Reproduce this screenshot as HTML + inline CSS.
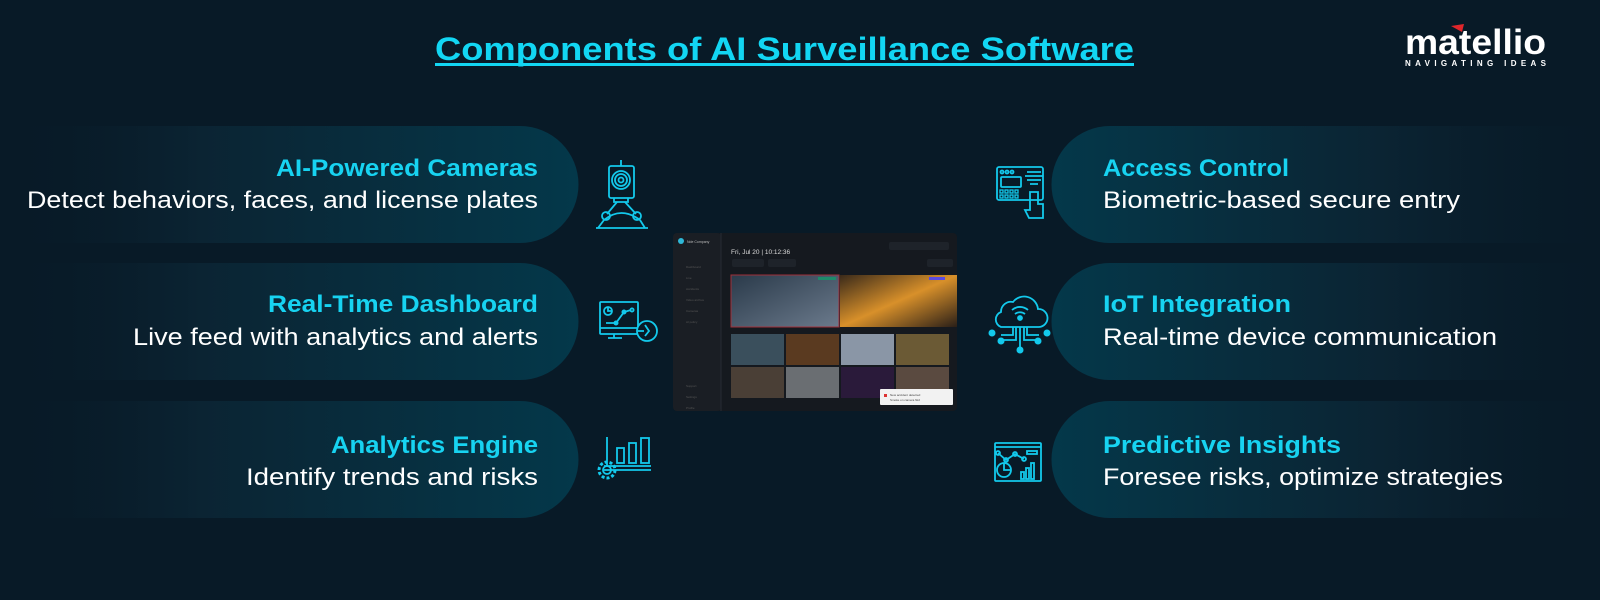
<!DOCTYPE html>
<html><head><meta charset="utf-8"><style>
html,body{margin:0;padding:0;background:#081a27;width:1600px;height:600px;overflow:hidden}
svg{display:block}
</style></head><body>
<svg width="1600" height="600" viewBox="0 0 1600 600" xmlns="http://www.w3.org/2000/svg" font-family="Liberation Sans, sans-serif">
<defs>
<linearGradient id="gl" x1="0" x2="1" y1="0" y2="0"><stop offset="0" stop-color="#081a27" stop-opacity="0"/><stop offset="0.35" stop-color="#0b2433"/><stop offset="1" stop-color="#04384a"/></linearGradient>
<linearGradient id="gr" x1="0" x2="1" y1="0" y2="0"><stop offset="0" stop-color="#04384a"/><stop offset="0.6" stop-color="#0b2433"/><stop offset="1" stop-color="#081a27" stop-opacity="0.3"/></linearGradient>
<linearGradient id="f1" x1="0" x2="1" y1="0" y2="1"><stop offset="0" stop-color="#2a3a4a"/><stop offset="1" stop-color="#6b7a8c"/></linearGradient>
<linearGradient id="f2" x1="0" x2="1" y1="0" y2="1"><stop offset="0" stop-color="#3a2a1a"/><stop offset="0.5" stop-color="#d8902a"/><stop offset="1" stop-color="#2a1f18"/></linearGradient>
</defs>
<rect width="1600" height="600" fill="#081a27"/>
<!-- pills left -->
<path d="M0 126 H520 A58.5 58.5 0 0 1 520 243 H0Z" fill="url(#gl)"/>
<path d="M0 263 H520 A58.5 58.5 0 0 1 520 380 H0Z" fill="url(#gl)"/>
<path d="M0 401 H520 A58.5 58.5 0 0 1 520 518 H0Z" fill="url(#gl)"/>
<!-- pills right -->
<path d="M1600 126 H1110 A58.5 58.5 0 0 0 1110 243 H1600Z" fill="url(#gr)"/>
<path d="M1600 263 H1110 A58.5 58.5 0 0 0 1110 380 H1600Z" fill="url(#gr)"/>
<path d="M1600 401 H1110 A58.5 58.5 0 0 0 1110 518 H1600Z" fill="url(#gr)"/>
<!-- title -->
<text x="435" y="60" font-size="32" font-weight="bold" fill="#12d6f3" textLength="699" lengthAdjust="spacingAndGlyphs">Components of AI Surveillance Software</text>
<rect x="435" y="63" width="699" height="3" fill="#12d6f3"/>
<!-- logo -->
<text x="1405" y="54" font-size="35" font-weight="bold" fill="#fff" textLength="141" lengthAdjust="spacingAndGlyphs">matellio</text>
<path d="M1451 26 L1464 24 L1462 32Z" fill="#e0262b"/>
<text x="1405" y="66" font-size="8" font-weight="bold" fill="#fff" textLength="141" lengthAdjust="spacing">NAVIGATING IDEAS</text>
<!-- left texts -->
<g font-size="24" text-anchor="end">
<text x="538" y="176" font-weight="bold" fill="#17d3f1" textLength="262" lengthAdjust="spacingAndGlyphs">AI-Powered Cameras</text>
<text x="538" y="208" fill="#fff" textLength="511" lengthAdjust="spacingAndGlyphs">Detect behaviors, faces, and license plates</text>
<text x="538" y="312" font-weight="bold" fill="#17d3f1" textLength="270" lengthAdjust="spacingAndGlyphs">Real-Time Dashboard</text>
<text x="538" y="345" fill="#fff" textLength="405" lengthAdjust="spacingAndGlyphs">Live feed with analytics and alerts</text>
<text x="538" y="453" font-weight="bold" fill="#17d3f1" textLength="207" lengthAdjust="spacingAndGlyphs">Analytics Engine</text>
<text x="538" y="485" fill="#fff" textLength="292" lengthAdjust="spacingAndGlyphs">Identify trends and risks</text>
</g>
<g font-size="24">
<text x="1103" y="176" font-weight="bold" fill="#17d3f1" textLength="186" lengthAdjust="spacingAndGlyphs">Access Control</text>
<text x="1103" y="208" fill="#fff" textLength="357" lengthAdjust="spacingAndGlyphs">Biometric-based secure entry</text>
<text x="1103" y="312" font-weight="bold" fill="#17d3f1" textLength="188" lengthAdjust="spacingAndGlyphs">IoT Integration</text>
<text x="1103" y="345" fill="#fff" textLength="394" lengthAdjust="spacingAndGlyphs">Real-time device communication</text>
<text x="1103" y="453" font-weight="bold" fill="#17d3f1" textLength="238" lengthAdjust="spacingAndGlyphs">Predictive Insights</text>
<text x="1103" y="485" fill="#fff" textLength="400" lengthAdjust="spacingAndGlyphs">Foresee risks, optimize strategies</text>
</g>
<!-- icons left -->
<g fill="none" stroke="#13c9ec" stroke-width="1.8">
<!-- camera -->
<line x1="621" y1="160" x2="621" y2="166"/>
<rect x="609" y="166" width="25" height="32" rx="2"/>
<circle cx="621" cy="180" r="9"/><circle cx="621" cy="180" r="6"/><circle cx="621" cy="180" r="2.5"/>
<path d="M614 198 V202 H628 V198"/>
<path d="M617 202 L607 214 M625 202 L636 214"/>
<circle cx="606" cy="216" r="4"/><circle cx="637" cy="216" r="4"/>
<path d="M598 228 L604 220 M645 228 L640 220 M604 220 Q621 206 640 220 M596 228 H648"/>
<!-- dashboard -->
<rect x="600" y="302" width="38" height="32" rx="1"/>
<path d="M600 328 H638 M614 334 V338 M608 338 H622"/>
<circle cx="608" cy="311" r="4"/><path d="M608 307 V311 H612"/>
<path d="M606 323 L616 323 L624 312 L631 310"/><circle cx="616" cy="323" r="1.6"/><circle cx="624" cy="312" r="1.6"/><circle cx="632" cy="310" r="1.6"/>
<circle cx="647" cy="331" r="10" fill="#081a27"/><path d="M645 325 L649 331 L645 336 M638 331 H644"/>
<!-- analytics -->
<path d="M607 437 V466 M604 466 H651 M604 470 H651"/>
<rect x="617" y="448" width="7" height="15"/><rect x="629" y="443" width="7" height="20"/><rect x="641" y="438" width="8" height="25"/>
<circle cx="607" cy="470" r="8" stroke-dasharray="3 2" stroke-width="3"/><circle cx="607" cy="470" r="4"/>
</g>
<!-- icons right -->
<g fill="none" stroke="#13c9ec" stroke-width="1.8">
<rect x="997" y="167" width="46" height="33" rx="2"/>
<rect x="1001" y="177" width="20" height="10" rx="1"/>
<circle cx="1002" cy="172" r="1.5"/><circle cx="1007" cy="172" r="1.5"/><circle cx="1012" cy="172" r="1.5"/>
<g stroke-width="1.3"><rect x="1000" y="190" width="3" height="3"/><rect x="1005" y="190" width="3" height="3"/><rect x="1010" y="190" width="3" height="3"/><rect x="1015" y="190" width="3" height="3"/><rect x="1000" y="195" width="3" height="3"/><rect x="1005" y="195" width="3" height="3"/><rect x="1010" y="195" width="3" height="3"/><rect x="1015" y="195" width="3" height="3"/></g>
<path d="M1027 172 H1041 M1025 176 H1043 M1027 180 H1041 M1030 184 H1038"/>
<path d="M1030 192 H1038 V204 H1043 V218 H1029 L1025 210 H1030Z"/>
<!-- cloud -->
<path d="M1001 327 H1039 A9 9 0 0 0 1038 309 A14 14 0 0 0 1013 302 A10 10 0 0 0 1001 312 A8 8 0 0 0 1001 327Z"/>
<path d="M1012 310 A12 12 0 0 1 1028 310 M1015 314 A8 8 0 0 1 1025 314"/><circle cx="1020" cy="318" r="2" fill="#13c9ec"/>
<path d="M1020 327 V348 M1013 327 V335 H1001 M1027 327 V335 H1039 M1016 327 V340 H1002 M1024 327 V340 H1038"/>
<g fill="#13c9ec" stroke="none"><circle cx="992" cy="333" r="3.5"/><circle cx="1047" cy="333" r="3.5"/><circle cx="1001" cy="341" r="3.5"/><circle cx="1038" cy="341" r="3.5"/><circle cx="1020" cy="350" r="3.5"/></g>
<!-- predictive -->
<rect x="995" y="443" width="46" height="38" rx="1"/><path d="M995 447 H1041"/>
<path d="M998 453 L1006 460 L1015 454 L1024 459"/><circle cx="998" cy="453" r="2"/><circle cx="1006" cy="460" r="2"/><circle cx="1015" cy="454" r="2"/><circle cx="1024" cy="459" r="2"/>
<rect x="1027" y="451" width="10" height="3"/>
<circle cx="1004" cy="470" r="7"/><path d="M1004 463 V470 H1011"/>
<rect x="1021" y="472" width="3" height="7"/><rect x="1026" y="468" width="3" height="11"/><rect x="1031" y="463" width="3" height="16"/>
</g>
<!-- dashboard screenshot -->
<rect x="673" y="233" width="284" height="178" rx="4" fill="#15191f"/>
<rect x="673" y="233" width="48" height="178" rx="4" fill="#1a1e24"/>
<line x1="721" y1="233" x2="721" y2="411" stroke="#262b33"/>
<circle cx="681" cy="241" r="3" fill="#2fb8d8"/>
<text x="687" y="243" font-size="3.5" fill="#bbb">Nde Company</text>
<g fill="#555" font-size="3"><text x="686" y="268">Dashboard</text><text x="686" y="279">Live</text><text x="686" y="290">Accidents</text><text x="686" y="301">Video archive</text><text x="686" y="312">Cameras</text><text x="686" y="323">AI policy</text><text x="686" y="387">Support</text><text x="686" y="398">Settings</text><text x="686" y="409">Profile</text></g>
<text x="731" y="254" font-size="6.5" fill="#ddd">Fri, Jul 20 | 10:12:36</text>
<rect x="889" y="242" width="60" height="8" rx="2" fill="#1e232a"/>
<rect x="732" y="259" width="32" height="8" rx="2" fill="#1e232a"/><rect x="768" y="259" width="28" height="8" rx="2" fill="#1e232a"/><rect x="927" y="259" width="26" height="8" rx="2" fill="#1e232a"/>
<rect x="731" y="275" width="108" height="52" fill="url(#f1)" stroke="#a0303a"/>
<rect x="840" y="275" width="117" height="52" fill="url(#f2)"/>
<rect x="818" y="277" width="18" height="3" fill="#1e8a6a"/><rect x="929" y="277" width="16" height="3" fill="#5b4ae0"/>
<rect x="731" y="334" width="53" height="31" fill="#3a4f5c"/><rect x="786" y="334" width="53" height="31" fill="#5a3a20"/><rect x="841" y="334" width="53" height="31" fill="#8a96a6"/><rect x="896" y="334" width="53" height="31" fill="#6b5a35"/>
<rect x="731" y="367" width="53" height="31" fill="#4a3f36"/><rect x="786" y="367" width="53" height="31" fill="#6a6e72"/><rect x="841" y="367" width="53" height="31" fill="#2a1a3a"/><rect x="896" y="367" width="53" height="31" fill="#5a4a40"/>
<rect x="880" y="389" width="73" height="16" rx="1" fill="#f2f2f2"/>
<rect x="884" y="394" width="3" height="3" fill="#d33"/>
<text x="890" y="396" font-size="3" fill="#444">New accident detected</text><text x="890" y="401" font-size="3" fill="#444">Smoke on camera №2</text>
</svg>
</body></html>
